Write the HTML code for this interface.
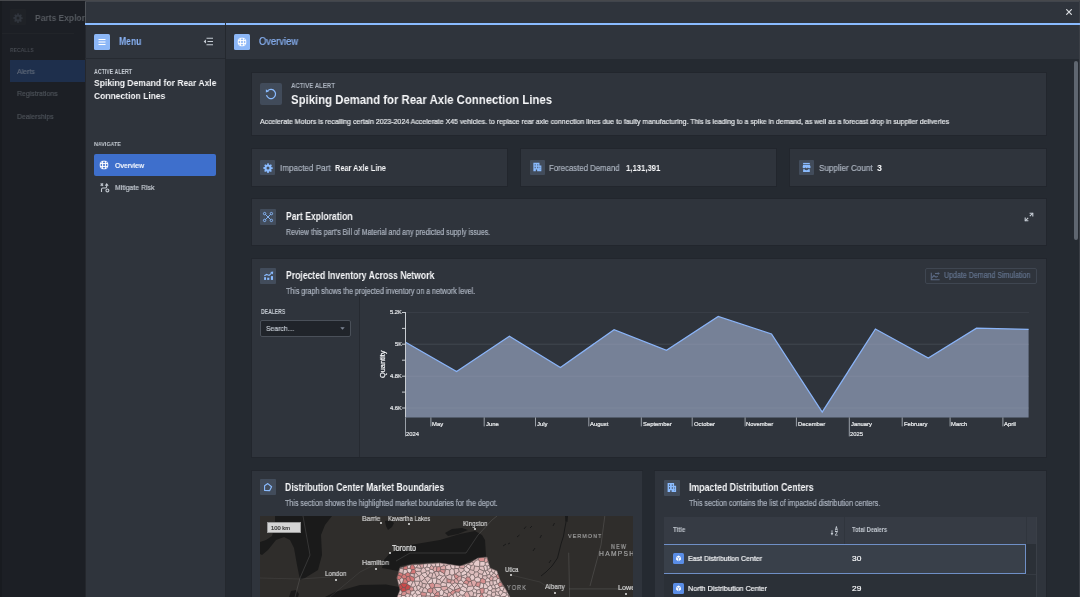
<!DOCTYPE html>
<html><head><meta charset="utf-8">
<style>
*{box-sizing:border-box;margin:0;padding:0}
html,body{width:1080px;height:597px;overflow:hidden;background:#1c1f25;font-family:"Liberation Sans",sans-serif;color:#f6f7f9}
.abs{position:absolute}
.t{position:absolute;white-space:nowrap;line-height:normal;transform-origin:0 0;will-change:transform}
</style></head><body>
<div class="abs" style="left:0px;top:0px;width:85px;height:597px;background:#1c1f25;"></div>
<div class="abs" style="left:0px;top:0px;width:2px;height:597px;background:#181b20;"></div>
<div class="abs" style="left:0px;top:0px;width:1080px;height:1px;background:#46484c;"></div>
<div class="abs" style="left:10px;top:9px;width:16px;height:16px;background:#1f2227;border-radius:1px"></div>
<svg class="abs" style="left:13.3px;top:12.7px" width="10" height="10" viewBox="0 0 16 16"><path fill="#30353d" fill-rule="evenodd" d="M8 5.6a2.4 2.4 0 100 4.8 2.4 2.4 0 000-4.8zM6.9 0.5h2.2l.4 2.1 1.3.6 1.8-1.2 1.6 1.6-1.2 1.8.6 1.3 2.1.4v2.2l-2.1.4-.6 1.3 1.2 1.8-1.6 1.6-1.8-1.2-1.3.6-.4 2.1H6.9l-.4-2.1-1.3-.6-1.8 1.2-1.6-1.6 1.2-1.8-.6-1.3L.5 9.1V6.9l2.1-.4.6-1.3L2 3.4 3.6 1.8l1.8 1.2 1.3-.6z"/></svg>
<div class="t" style="left:35.30px;top:12.31px;font-size:9.59px;font-weight:bold;color:#55595f;transform:scaleX(0.8844);">Parts Explorer</div>
<div class="abs" style="left:2px;top:33px;width:72px;height:1px;background:#212429;"></div>
<div class="t" style="left:10.40px;top:46.44px;font-size:6.25px;font-weight:bold;color:#43474e;transform:scaleX(0.8064);">RECALLS</div>
<div class="abs" style="left:10px;top:60px;width:75px;height:22px;background:#1e2f4c;"></div>
<div class="t" style="left:16.70px;top:66.82px;font-size:7.70px;font-weight:normal;-webkit-text-stroke:0.2px currentColor;color:#5e6878;transform:scaleX(0.9090);">Alerts</div>
<div class="t" style="left:16.70px;top:89.32px;font-size:7.70px;font-weight:normal;-webkit-text-stroke:0.2px currentColor;color:#4d5259;transform:scaleX(0.9053);">Registrations</div>
<div class="t" style="left:16.70px;top:112.02px;font-size:7.70px;font-weight:normal;-webkit-text-stroke:0.2px currentColor;color:#4d5259;transform:scaleX(0.9022);">Dealerships</div>
<div class="abs" style="left:85px;top:1px;width:995px;height:596px;background:#2f343c;"></div>
<div class="abs" style="left:85px;top:1px;width:1px;height:22px;background:#50545a;"></div>
<div class="abs" style="left:85px;top:25px;width:1px;height:572px;background:#24272d;"></div>
<div class="abs" style="left:85px;top:1px;width:995px;height:1px;background:#41454c;"></div>
<div class="abs" style="left:1079px;top:1px;width:1px;height:596px;background:#3b3f46;"></div>
<svg class="abs" style="left:1066px;top:9px" width="6" height="6" viewBox="0 0 6 6"><path d="M0.3 0.3L5.7 5.7M5.7 0.3L0.3 5.7" stroke="#dfe2e6" stroke-width="1.15"/></svg>
<div class="abs" style="left:85px;top:23px;width:140px;height:2px;background:#8abbff;"></div>
<div class="abs" style="left:226px;top:23px;width:854px;height:2px;background:#8abbff;"></div>
<div class="abs" style="left:225px;top:25px;width:1px;height:572px;background:#24282e;"></div>
<div class="abs" style="left:85px;top:58px;width:140px;height:1px;background:#262a31;"></div>
<div class="abs" style="left:94px;top:34px;width:16px;height:16px;background:#8cb7f7;border-radius:1.5px"></div>
<svg class="abs" style="left:94px;top:34px" width="16" height="16"><path d="M4.5 5.5h7M4.5 8h7M4.5 10.5h7" stroke="#fff" stroke-width="1.1"/></svg>
<div class="t" style="left:118.70px;top:35.71px;font-size:10.03px;font-weight:bold;color:#8ab4f8;transform:scaleX(0.8555);">Menu</div>
<svg class="abs" style="left:203px;top:37px" width="11" height="9" viewBox="0 0 11 9"><path d="M0.6 4.5L3 2.6v3.8z" fill="#c5cbd3"/><path d="M3.5 1.2h6.5M4.5 4.5h5.5M3.5 7.8h6.5" stroke="#c5cbd3" stroke-width="1.1"/></svg>
<div class="t" style="left:93.80px;top:67.97px;font-size:6.54px;font-weight:bold;color:#c5cbd3;transform:scaleX(0.8024);">ACTIVE ALERT</div>
<div class="t" style="left:93.80px;top:77.38px;font-size:9.74px;font-weight:bold;color:#f6f7f9;transform:scaleX(0.8797);">Spiking Demand for Rear Axle</div>
<div class="t" style="left:93.80px;top:89.78px;font-size:9.74px;font-weight:bold;color:#f6f7f9;transform:scaleX(0.8727);">Connection Lines</div>
<div class="t" style="left:93.80px;top:140.73px;font-size:5.81px;font-weight:bold;color:#c5cbd3;transform:scaleX(0.9219);">NAVIGATE</div>
<div class="abs" style="left:94px;top:154px;width:122px;height:22px;background:#3e6fcc;border-radius:2px"></div>
<svg class="abs" style="left:99.2px;top:160.2px" width="10" height="10" viewBox="0 0 10 10"><g fill="none" stroke="#fff"><circle cx="5" cy="5" r="4.1" stroke-width="1.4"/><path d="M3.6 1v8M6.4 1v8M1 3.6h8M1 6.4h8" stroke-width="1"/></g><circle cx="5" cy="5" r="4.9" fill="none" stroke="#3e6fcc" stroke-width="0.9"/></svg>
<div class="t" style="left:114.60px;top:160.86px;font-size:7.99px;font-weight:normal;-webkit-text-stroke:0.2px currentColor;color:#ffffff;transform:scaleX(0.8735);">Overview</div>
<svg class="abs" style="left:96px;top:180px" width="16" height="16" viewBox="0 0 16 16"><g fill="none" stroke="#c5cbd3" stroke-width="1.1"><path d="M4.7 3.5L7.1 5.9M7.1 3.5L4.7 5.9"/><path d="M10.7 5.2V6.6Q10.7 8 9.3 8H6.9Q5.5 8 5.5 9.4V11.9"/><circle cx="11.4" cy="10.4" r="1.45"/></g><path d="M8.7 5.7L10.7 3.1 12.7 5.7z" fill="#c5cbd3"/></svg>
<div class="t" style="left:114.60px;top:182.86px;font-size:7.99px;font-weight:normal;-webkit-text-stroke:0.2px currentColor;color:#c5cbd3;transform:scaleX(0.8633);">Mitigate Risk</div>
<div class="abs" style="left:226px;top:59px;width:853px;height:538px;background:#252a31;"></div>
<div class="abs" style="left:234px;top:34px;width:16px;height:16px;background:#8cb7f7;border-radius:1.5px"></div>
<svg class="abs" style="left:237.1px;top:36.8px" width="10" height="10" viewBox="0 0 10 10"><g fill="none" stroke="#fff"><circle cx="5" cy="5" r="4.1" stroke-width="1.4"/><path d="M3.6 1v8M6.4 1v8M1 3.6h8M1 6.4h8" stroke-width="1"/></g><circle cx="5" cy="5" r="4.9" fill="none" stroke="#8cb7f7" stroke-width="0.9"/></svg>
<div class="t" style="left:259.00px;top:35.51px;font-size:10.03px;font-weight:normal;-webkit-text-stroke:0.2px currentColor;color:#8ab4f8;transform:scaleX(0.9355);">Overview</div>
<div class="abs" style="left:1074px;top:61px;width:4px;height:179px;background:#5f6670;border-radius:2px"></div>
<div class="abs" style="left:252px;top:73px;width:794px;height:62px;background:#2f343c;box-shadow:0 0 0 1px rgba(17,20,24,0.15)"></div>
<div class="abs" style="left:260px;top:83px;width:22px;height:22px;background:#414b5a;border-radius:2px"></div>
<svg class="abs" style="left:264px;top:87px" width="14" height="14" viewBox="0 0 14 14"><path d="M3.6 3.9A4.6 4.6 0 1 1 2.5 8.2" fill="none" stroke="#8abbff" stroke-width="1.25"/><path d="M1.9 2.2L4.9 4.4 1.9 5.6z" fill="#8abbff"/></svg>
<div class="t" style="left:290.60px;top:81.71px;font-size:6.83px;font-weight:bold;color:#abb3bf;transform:scaleX(0.8895);">ACTIVE ALERT</div>
<div class="t" style="left:290.60px;top:91.78px;font-size:12.94px;font-weight:bold;color:#f6f7f9;transform:scaleX(0.8785);">Spiking Demand for Rear Axle Connection Lines</div>
<div class="t" style="left:260.00px;top:117.32px;font-size:7.27px;font-weight:normal;-webkit-text-stroke:0.2px currentColor;color:#e5e8eb;transform:scaleX(0.9593);">Accelerate Motors is recalling certain 2023-2024 Accelerate X45 vehicles. to replace rear axle connection lines due to faulty manufacturing. This is leading to a spike in demand, as well as a forecast drop in supplier deliveries</div>
<div class="abs" style="left:252px;top:149px;width:255px;height:37px;background:#2f343c;box-shadow:0 0 0 1px rgba(17,20,24,0.15)"></div>
<div class="abs" style="left:521px;top:149px;width:255px;height:37px;background:#2f343c;box-shadow:0 0 0 1px rgba(17,20,24,0.15)"></div>
<div class="abs" style="left:790px;top:149px;width:256px;height:37px;background:#2f343c;box-shadow:0 0 0 1px rgba(17,20,24,0.15)"></div>
<div class="abs" style="left:260px;top:160px;width:15px;height:15px;background:#424c5b;border-radius:1px"></div>
<svg class="abs" style="left:262.5px;top:162.5px" width="10" height="10" viewBox="0 0 16 16"><path fill="#8abbff" fill-rule="evenodd" d="M8 5.6a2.4 2.4 0 100 4.8 2.4 2.4 0 000-4.8zM6.9 0.5h2.2l.4 2.1 1.3.6 1.8-1.2 1.6 1.6-1.2 1.8.6 1.3 2.1.4v2.2l-2.1.4-.6 1.3 1.2 1.8-1.6 1.6-1.8-1.2-1.3.6-.4 2.1H6.9l-.4-2.1-1.3-.6-1.8 1.2-1.6-1.6 1.2-1.8-.6-1.3L.5 9.1V6.9l2.1-.4.6-1.3L2 3.4 3.6 1.8l1.8 1.2 1.3-.6z"/></svg>
<div class="t" style="left:279.60px;top:162.77px;font-size:8.87px;font-weight:normal;-webkit-text-stroke:0.2px currentColor;color:#abb3bf;transform:scaleX(0.9168);">Impacted Part</div>
<div class="t" style="left:335.00px;top:162.77px;font-size:8.87px;font-weight:bold;color:#f6f7f9;transform:scaleX(0.8308);">Rear Axle Line</div>
<div class="abs" style="left:530px;top:160px;width:15px;height:15px;background:#424c5b;border-radius:1px"></div>
<svg class="abs" style="left:530px;top:160px" width="15" height="15" viewBox="0 0 16 16"><path fill="#8abbff" fill-rule="evenodd" d="M3.6 3h6.5v2.8h2v6.1H3.6zM5 4.6v1.2h1V4.6zm2.8 0v1.2h1V4.6zM5 7.2v1.6h1V7.2zm2.8 0v1.6h1V7.2zm2.5 0v1.6h.6V7.2zM6.2 10.2v1.7h1.4v-1.7zm4.2-0.4v.6h.6v-.6z"/></svg>
<div class="t" style="left:549.40px;top:162.77px;font-size:8.87px;font-weight:normal;-webkit-text-stroke:0.2px currentColor;color:#abb3bf;transform:scaleX(0.8789);">Forecasted Demand</div>
<div class="t" style="left:625.50px;top:162.77px;font-size:8.87px;font-weight:bold;color:#f6f7f9;transform:scaleX(0.8696);">1,131,391</div>
<div class="abs" style="left:799px;top:160px;width:15px;height:15px;background:#424c5b;border-radius:1px"></div>
<svg class="abs" style="left:799px;top:160px" width="15" height="15" viewBox="0 0 15 15"><g fill="#8abbff"><rect x="4.1" y="2.9" width="6.7" height="1.2"/><path d="M4.1 4.7h6.8l0.7 2.4a1.33 1.2 0 0 1-2.66 0a1.33 1.2 0 0 1-2.66 0a1.33 1.2 0 0 1-2.66 0z"/><path d="M4.1 9.3h1.6a1.8 1.1 0 0 0 3.5 0h1.6v2.8H4.1z"/></g></svg>
<div class="t" style="left:818.50px;top:162.77px;font-size:8.87px;font-weight:normal;-webkit-text-stroke:0.2px currentColor;color:#abb3bf;transform:scaleX(0.9139);">Supplier Count</div>
<div class="t" style="left:876.60px;top:162.77px;font-size:8.87px;font-weight:bold;color:#f6f7f9;transform:scaleX(0.9734);">3</div>
<div class="abs" style="left:252px;top:199px;width:794px;height:46px;background:#2f343c;box-shadow:0 0 0 1px rgba(17,20,24,0.15)"></div>
<div class="abs" style="left:260px;top:209px;width:16px;height:16px;background:#424c5b;border-radius:1px"></div>
<svg class="abs" style="left:262px;top:211px" width="12" height="12" viewBox="0 0 12 12"><g fill="none" stroke="#8abbff" stroke-width="0.9"><circle cx="2.6" cy="2.6" r="1.2"/><circle cx="9.4" cy="2.6" r="1.2"/><circle cx="2.6" cy="9.4" r="1.2"/><circle cx="9.4" cy="9.4" r="1.2"/><path d="M3.5 3.5l5 5M8.5 3.5l-5 5"/></g></svg>
<div class="t" style="left:285.70px;top:210.85px;font-size:10.10px;font-weight:bold;color:#f6f7f9;transform:scaleX(0.8536);">Part Exploration</div>
<div class="t" style="left:285.70px;top:227.66px;font-size:8.21px;font-weight:normal;-webkit-text-stroke:0.2px currentColor;color:#abb3bf;transform:scaleX(0.8539);">Review this part's Bill of Material and any predicted supply issues.</div>
<svg class="abs" style="left:1024px;top:211.5px" width="10" height="10" viewBox="0 0 10 10"><g fill="none" stroke="#c8ced6" stroke-width="1.1"><path d="M1.2 8.8l3-3M5.8 4.2l3-3"/><path d="M1.2 5.6v3.2h3.2M5.6 1.2h3.2v3.2"/></g></svg>
<div class="abs" style="left:252px;top:259px;width:794px;height:198px;background:#2f343c;box-shadow:0 0 0 1px rgba(17,20,24,0.15)"></div>
<div class="abs" style="left:260px;top:268px;width:16px;height:16px;background:#424c5b;border-radius:1px"></div>
<svg class="abs" style="left:260px;top:268px" width="16" height="16" viewBox="0 0 16 16"><g fill="#8abbff"><rect x="4.1" y="9.2" width="1.9" height="2.7"/><rect x="7.2" y="9.7" width="2.1" height="2.2"/><rect x="10.9" y="8.1" width="2.1" height="3.8"/><path d="M13.2 3.6l-0.3 3-2.7-2.6z"/></g><path d="M4.3 7.8L6.7 6.4 9.1 7.4 11.6 5.1" fill="none" stroke="#8abbff" stroke-width="1.1"/></svg>
<div class="t" style="left:285.70px;top:270.05px;font-size:10.10px;font-weight:bold;color:#f6f7f9;transform:scaleX(0.8546);">Projected Inventory Across Network</div>
<div class="t" style="left:285.70px;top:286.66px;font-size:8.21px;font-weight:normal;-webkit-text-stroke:0.2px currentColor;color:#abb3bf;transform:scaleX(0.8586);">This graph shows the projected inventory on a network level.</div>
<div class="abs" style="left:359px;top:296px;width:1px;height:161px;background:#262a31;"></div>
<div class="t" style="left:260.80px;top:308.35px;font-size:7.12px;font-weight:bold;color:#c5cbd3;transform:scaleX(0.7140);">DEALERS</div>
<div class="abs" style="left:260px;top:320px;width:91px;height:17px;background:#20242a;border:1px solid #4a5059;border-radius:2px"></div>
<div class="t" style="left:265.90px;top:324.36px;font-size:7.99px;font-weight:normal;-webkit-text-stroke:0.2px currentColor;color:#c5cbd3;transform:scaleX(0.8552);">Search…</div>
<svg class="abs" style="left:339.5px;top:327px" width="5" height="3"><path d="M0.3 0.3h4.4L2.5 2.7z" fill="#7c8594"/></svg>
<svg class="abs" style="left:405.1px;top:300px;overflow:visible" width="624.1" height="140"><line x1="0" x2="624.1" y1="12.5" y2="12.5" stroke="#383d46" stroke-width="1"/><line x1="0" x2="624.1" y1="44.19999999999999" y2="44.19999999999999" stroke="#383d46" stroke-width="1"/><line x1="0" x2="624.1" y1="76.19999999999999" y2="76.19999999999999" stroke="#383d46" stroke-width="1"/><line x1="0" x2="624.1" y1="108.0" y2="108.0" stroke="#383d46" stroke-width="1"/><polygon points="0.5,117.39999999999998 0.6,42.3 51.6,71.5 104.4,36.3 155.4,67.5 209.1,29.7 261.5,50.3 313.2,16.5 366.5,34.0 417.2,112.0 470.4,29.0 523.3,58.0 571.5,28.2 623.6,29.3 623.6,117.39999999999998" fill="#768197"/><line x1="0" x2="624.1" y1="44.19999999999999" y2="44.19999999999999" stroke="#ffffff" stroke-opacity="0.06" stroke-width="1"/><line x1="0" x2="624.1" y1="76.19999999999999" y2="76.19999999999999" stroke="#ffffff" stroke-opacity="0.06" stroke-width="1"/><line x1="0" x2="624.1" y1="108.0" y2="108.0" stroke="#ffffff" stroke-opacity="0.06" stroke-width="1"/><polyline points="0.6,42.3 51.6,71.5 104.4,36.3 155.4,67.5 209.1,29.7 261.5,50.3 313.2,16.5 366.5,34.0 417.2,112.0 470.4,29.0 523.3,58.0 571.5,28.2 623.6,29.3" fill="none" stroke="#8ab4f8" stroke-width="1.3" stroke-linejoin="miter"/><line x1="0.5" x2="0.5" y1="12" y2="117.39999999999998" stroke="#c9cdd2" stroke-width="1"/><line x1="-3" x2="0.5" y1="12.5" y2="12.5" stroke="#c9cdd2" stroke-width="1"/><line x1="-3" x2="0.5" y1="28.399999999999977" y2="28.399999999999977" stroke="#c9cdd2" stroke-width="1"/><line x1="-3" x2="0.5" y1="44.19999999999999" y2="44.19999999999999" stroke="#c9cdd2" stroke-width="1"/><line x1="-3" x2="0.5" y1="60.19999999999999" y2="60.19999999999999" stroke="#c9cdd2" stroke-width="1"/><line x1="-3" x2="0.5" y1="76.19999999999999" y2="76.19999999999999" stroke="#c9cdd2" stroke-width="1"/><line x1="-3" x2="0.5" y1="92.10000000000002" y2="92.10000000000002" stroke="#c9cdd2" stroke-width="1"/><line x1="-3" x2="0.5" y1="108.0" y2="108.0" stroke="#c9cdd2" stroke-width="1"/><line x1="25.9" x2="25.9" y1="117.39999999999998" y2="126.39999999999998" stroke="#9aa0a8" stroke-width="1"/><line x1="79.2" x2="79.2" y1="117.39999999999998" y2="126.39999999999998" stroke="#9aa0a8" stroke-width="1"/><line x1="130.5" x2="130.5" y1="117.39999999999998" y2="126.39999999999998" stroke="#9aa0a8" stroke-width="1"/><line x1="183.8" x2="183.8" y1="117.39999999999998" y2="126.39999999999998" stroke="#9aa0a8" stroke-width="1"/><line x1="236.3" x2="236.3" y1="117.39999999999998" y2="126.39999999999998" stroke="#9aa0a8" stroke-width="1"/><line x1="287.2" x2="287.2" y1="117.39999999999998" y2="126.39999999999998" stroke="#9aa0a8" stroke-width="1"/><line x1="340.1" x2="340.1" y1="117.39999999999998" y2="126.39999999999998" stroke="#9aa0a8" stroke-width="1"/><line x1="391.4" x2="391.4" y1="117.39999999999998" y2="126.39999999999998" stroke="#9aa0a8" stroke-width="1"/><line x1="444.3" x2="444.3" y1="117.39999999999998" y2="136.39999999999998" stroke="#9aa0a8" stroke-width="1"/><line x1="497.2" x2="497.2" y1="117.39999999999998" y2="126.39999999999998" stroke="#9aa0a8" stroke-width="1"/><line x1="545.1" x2="545.1" y1="117.39999999999998" y2="126.39999999999998" stroke="#9aa0a8" stroke-width="1"/><line x1="597.9" x2="597.9" y1="117.39999999999998" y2="126.39999999999998" stroke="#9aa0a8" stroke-width="1"/><line x1="0.5" x2="0.5" y1="117.39999999999998" y2="136.39999999999998" stroke="#9aa0a8" stroke-width="1"/></svg>
<div class="t" style="left:390.00px;top:309.23px;font-size:5.81px;font-weight:normal;-webkit-text-stroke:0.2px currentColor;color:#e6e8eb;transform:scaleX(0.9783);">5.2K</div>
<div class="t" style="left:394.90px;top:340.93px;font-size:5.81px;font-weight:normal;-webkit-text-stroke:0.2px currentColor;color:#e6e8eb;transform:scaleX(0.9562);">5K</div>
<div class="t" style="left:390.00px;top:372.93px;font-size:5.81px;font-weight:normal;-webkit-text-stroke:0.2px currentColor;color:#e6e8eb;transform:scaleX(0.9783);">4.8K</div>
<div class="t" style="left:390.00px;top:404.73px;font-size:5.81px;font-weight:normal;-webkit-text-stroke:0.2px currentColor;color:#e6e8eb;transform:scaleX(0.9783);">4.6K</div>
<div class="t" style="left:432.20px;top:420.57px;font-size:5.89px;font-weight:normal;-webkit-text-stroke:0.2px currentColor;color:#eceef0;">May</div>
<div class="t" style="left:485.50px;top:420.57px;font-size:5.89px;font-weight:normal;-webkit-text-stroke:0.2px currentColor;color:#eceef0;">June</div>
<div class="t" style="left:536.80px;top:420.57px;font-size:5.89px;font-weight:normal;-webkit-text-stroke:0.2px currentColor;color:#eceef0;">July</div>
<div class="t" style="left:590.10px;top:420.57px;font-size:5.89px;font-weight:normal;-webkit-text-stroke:0.2px currentColor;color:#eceef0;">August</div>
<div class="t" style="left:642.60px;top:420.57px;font-size:5.89px;font-weight:normal;-webkit-text-stroke:0.2px currentColor;color:#eceef0;">September</div>
<div class="t" style="left:693.50px;top:420.57px;font-size:5.89px;font-weight:normal;-webkit-text-stroke:0.2px currentColor;color:#eceef0;">October</div>
<div class="t" style="left:746.40px;top:420.57px;font-size:5.89px;font-weight:normal;-webkit-text-stroke:0.2px currentColor;color:#eceef0;">November</div>
<div class="t" style="left:797.70px;top:420.57px;font-size:5.89px;font-weight:normal;-webkit-text-stroke:0.2px currentColor;color:#eceef0;">December</div>
<div class="t" style="left:850.60px;top:420.57px;font-size:5.89px;font-weight:normal;-webkit-text-stroke:0.2px currentColor;color:#eceef0;">January</div>
<div class="t" style="left:903.50px;top:420.57px;font-size:5.89px;font-weight:normal;-webkit-text-stroke:0.2px currentColor;color:#eceef0;">February</div>
<div class="t" style="left:951.40px;top:420.57px;font-size:5.89px;font-weight:normal;-webkit-text-stroke:0.2px currentColor;color:#eceef0;">March</div>
<div class="t" style="left:1004.20px;top:420.57px;font-size:5.89px;font-weight:normal;-webkit-text-stroke:0.2px currentColor;color:#eceef0;">April</div>
<div class="t" style="left:406.40px;top:430.57px;font-size:5.89px;font-weight:normal;-webkit-text-stroke:0.2px currentColor;color:#e6e8eb;">2024</div>
<div class="t" style="left:850.20px;top:430.57px;font-size:5.89px;font-weight:normal;-webkit-text-stroke:0.2px currentColor;color:#e6e8eb;">2025</div>
<svg class="abs" style="left:374px;top:340px" width="16" height="50"><text x="0" y="0" transform="translate(11.3,24.3) rotate(-90)" text-anchor="middle" font-family="Liberation Sans" font-size="7.4" fill="#f6f7f9" stroke="#f6f7f9" stroke-width="0.2">Quantity</text></svg>
<div class="abs" style="left:925px;top:268px;width:112px;height:16px;background:transparent;border:1px solid #3f4651;border-radius:2px"></div>
<svg class="abs" style="left:926px;top:268px" width="16" height="16" viewBox="0 0 16 16"><g fill="none" stroke="#5b6a84" stroke-width="1.1"><path d="M5.3 4.8v7h8.3"/><path d="M5.8 9.8L7.9 7.6 10 9.2 11.8 8.2"/><path d="M9 5.5H12.3"/></g><path d="M11.8 3.9L13.9 5.5 11.8 7.1z" fill="#5b6a84"/></svg>
<div class="t" style="left:943.70px;top:271.29px;font-size:8.28px;font-weight:normal;-webkit-text-stroke:0.2px currentColor;color:#62728c;transform:scaleX(0.8538);">Update Demand Simulation</div>
<div class="abs" style="left:252px;top:471px;width:390px;height:126px;background:#2f343c;box-shadow:0 0 0 1px rgba(17,20,24,0.15)"></div>
<div class="abs" style="left:260px;top:479px;width:16px;height:16px;background:#424c5b;border-radius:1px"></div>
<svg class="abs" style="left:260px;top:479px" width="16" height="16" viewBox="0 0 16 16"><path d="M7.8 4.6L11.6 7.7 9.7 11.6 4.6 11.5 4.6 6.7z" fill="none" stroke="#8abbff" stroke-width="1.15" stroke-linejoin="round"/></svg>
<div class="t" style="left:285.10px;top:481.75px;font-size:10.10px;font-weight:bold;color:#f6f7f9;transform:scaleX(0.8600);">Distribution Center Market Boundaries</div>
<div class="t" style="left:285.10px;top:498.56px;font-size:8.21px;font-weight:normal;-webkit-text-stroke:0.2px currentColor;color:#abb3bf;transform:scaleX(0.8653);">This section shows the highlighted market boundaries for the depot.</div>
<div class="abs" style="left:655px;top:471px;width:391px;height:126px;background:#2f343c;box-shadow:0 0 0 1px rgba(17,20,24,0.15)"></div>
<div class="abs" style="left:664px;top:480px;width:16px;height:16px;background:#424c5b;border-radius:1px"></div>
<svg class="abs" style="left:664px;top:480px" width="16" height="16" viewBox="0 0 16 16"><path fill="#8abbff" fill-rule="evenodd" d="M3.6 3h6.5v2.8h2v6.1H3.6zM5 4.6v1.2h1V4.6zm2.8 0v1.2h1V4.6zM5 7.2v1.6h1V7.2zm2.8 0v1.6h1V7.2zm2.5 0v1.6h.6V7.2zM6.2 10.2v1.7h1.4v-1.7zm4.2-0.4v.6h.6v-.6z"/></svg>
<div class="t" style="left:688.50px;top:482.05px;font-size:10.10px;font-weight:bold;color:#f6f7f9;transform:scaleX(0.8645);">Impacted Distribution Centers</div>
<div class="t" style="left:688.50px;top:498.56px;font-size:8.21px;font-weight:normal;-webkit-text-stroke:0.2px currentColor;color:#abb3bf;transform:scaleX(0.8664);">This section contains the list of impacted distribution centers.</div>
<div class="abs" style="left:664px;top:517px;width:372px;height:80px;background:#2b3037;"></div>
<div class="abs" style="left:664px;top:517px;width:372px;height:27px;background:#363b44;"></div>
<div class="abs" style="left:844px;top:517px;width:1px;height:27px;background:#30353d;"></div>
<div class="abs" style="left:1026px;top:517px;width:1px;height:27px;background:#30353d;"></div>
<div class="abs" style="left:1036px;top:517px;width:1px;height:80px;background:#3a3f47;"></div>
<div class="t" style="left:673.20px;top:526.21px;font-size:6.40px;font-weight:bold;color:#c5cbd3;transform:scaleX(0.9439);">Title</div>
<svg class="abs" style="left:829.5px;top:524.5px" width="9" height="12" viewBox="0 0 9 12"><g fill="#c5cbd3"><path d="M4.9 5.6L6 1.2h.8L7.9 5.6h-.8l-.25-.9H5.95l-.25.9zm1.25-1.6h.5L6.4 2.6z"/><path d="M5 6.1h2.8v.7L5.9 9.8h1.9v.8H4.9v-.7l1.9-3h-1.8z"/><path d="M0.6 8h2.8L2 10.5z"/></g><path d="M2 5.3v3" stroke="#c5cbd3" stroke-width="0.9"/></svg>
<div class="t" style="left:851.70px;top:526.21px;font-size:6.40px;font-weight:bold;color:#c5cbd3;transform:scaleX(0.8869);">Total Dealers</div>
<div class="abs" style="left:664px;top:544px;width:362px;height:30px;background:#39404a;border:1px solid #6f8fc6;border-left:none"></div>
<div class="abs" style="left:1026px;top:574px;width:10px;height:1px;background:#353a42;"></div>
<div class="abs" style="left:673px;top:553px;width:11px;height:11px;background:#5a8de6;border-radius:1.5px"></div><svg class="abs" style="left:673px;top:553px" width="11" height="11" viewBox="0 0 11 11"><path d="M5.5 2.6l2.4 1.3v2.9L5.5 8.2 3.1 6.8V3.9z" fill="#fff"/><path d="M3.3 4l2.2 1.2 2.2-1.2M5.5 5.2v2.8" stroke="#5a8de6" stroke-width="0.6" fill="none"/></svg>
<div class="t" style="left:687.80px;top:554.05px;font-size:7.56px;font-weight:normal;-webkit-text-stroke:0.2px currentColor;color:#f6f7f9;transform:scaleX(0.9284);">East Distribution Center</div>
<div class="t" style="left:851.70px;top:554.05px;font-size:7.56px;font-weight:normal;-webkit-text-stroke:0.2px currentColor;color:#f6f7f9;transform:scaleX(1.1062);">30</div>
<div class="abs" style="left:673px;top:583px;width:11px;height:11px;background:#5a8de6;border-radius:1.5px"></div><svg class="abs" style="left:673px;top:583px" width="11" height="11" viewBox="0 0 11 11"><path d="M5.5 2.6l2.4 1.3v2.9L5.5 8.2 3.1 6.8V3.9z" fill="#fff"/><path d="M3.3 4l2.2 1.2 2.2-1.2M5.5 5.2v2.8" stroke="#5a8de6" stroke-width="0.6" fill="none"/></svg>
<div class="t" style="left:687.80px;top:584.05px;font-size:7.56px;font-weight:normal;-webkit-text-stroke:0.2px currentColor;color:#f6f7f9;transform:scaleX(0.9522);">North Distribution Center</div>
<div class="t" style="left:851.70px;top:584.05px;font-size:7.56px;font-weight:normal;-webkit-text-stroke:0.2px currentColor;color:#f6f7f9;transform:scaleX(1.1062);">29</div>
<svg class="abs" style="left:260px;top:516px" width="373" height="81" viewBox="0 0 373 81"><rect width="373" height="81" fill="#2f2d2b"/><polygon points="15.0,0.0 72.0,0.0 65.0,9.0 61.0,19.0 62.0,39.0 58.0,54.0 45.0,62.0 40.0,64.0 37.0,49.0 34.0,32.0 30.0,24.0 24.0,21.0 16.0,24.0 8.0,34.0 2.0,39.0 0.0,38.0 0.0,26.0 6.0,24.0 12.0,20.0 15.0,9.0" fill="#1a1a1a"/><polygon points="65.0,81.0 75.0,76.0 100.0,69.0 126.0,68.5 139.0,71.0 140.0,81.0" fill="#1a1a1a"/><polygon points="29.0,81.0 31.0,75.0 36.0,74.0 39.0,78.0 38.0,81.0" fill="#1a1a1a"/><polygon points="122.0,52.0 124.0,44.0 130.0,37.0 150.0,29.0 180.0,24.0 200.0,18.0 215.0,15.0 222.0,19.0 225.0,24.0 226.0,40.0 230.0,50.0 220.0,42.0 212.0,44.0 200.0,50.0 185.0,51.0 180.0,46.0 155.0,47.0 140.0,50.0 138.0,55.0" fill="#1a1a1a"/><polygon points="185.0,17.0 192.0,13.0 202.0,12.0 208.0,14.0 198.0,18.0 188.0,20.0" fill="#1a1a1a"/><polygon points="210.0,10.0 216.0,6.0 220.0,8.0 214.0,13.0" fill="#1a1a1a"/><polygon points="125.0,5.0 130.0,4.0 134.0,7.0 132.0,11.0 128.0,14.0 126.0,10.0" fill="#1a1a1a"/><polyline points="306.5,0.0 306.0,6.0 304.5,14.0 303.5,20.0 301.0,28.0 299.0,36.0 297.5,42.0 292.0,50.0 286.0,56.0 281.0,60.0" fill="none" stroke="#1a1a1a" stroke-width="1.0"/><polygon points="305.0,0.0 308.0,0.0 307.5,6.0 305.5,5.0" fill="#1a1a1a"/><line x1="264" y1="13" x2="266" y2="10.5" stroke="#1a1a1a" stroke-width="1.0"/><line x1="257" y1="21" x2="259.5" y2="19" stroke="#1a1a1a" stroke-width="1.0"/><line x1="273" y1="35" x2="275" y2="32" stroke="#1a1a1a" stroke-width="1.0"/><line x1="280" y1="22" x2="281.5" y2="19" stroke="#1a1a1a" stroke-width="1.0"/><line x1="243" y1="30" x2="246" y2="28" stroke="#1a1a1a" stroke-width="1.0"/><line x1="293" y1="10" x2="294.5" y2="7" stroke="#1a1a1a" stroke-width="1.0"/><line x1="289" y1="47" x2="291" y2="44" stroke="#1a1a1a" stroke-width="1.0"/><line x1="270" y1="12" x2="272" y2="10" stroke="#1a1a1a" stroke-width="1.0"/><line x1="248" y1="28" x2="250" y2="27" stroke="#1a1a1a" stroke-width="1.0"/><polyline points="43.0,0.0 50.0,39.0 40.0,62.0 35.0,81.0" stroke="#9a9896" stroke-opacity="0.45" stroke-width="0.5" fill="none"/><polyline points="136.0,45.0 150.0,37.0 206.0,37.0 218.0,19.0 232.0,4.0 237.0,0.0" stroke="#9a9896" stroke-opacity="0.45" stroke-width="0.5" fill="none"/><polyline points="308.7,36.7 309.6,81.0" stroke="#9a9896" stroke-opacity="0.45" stroke-width="0.5" fill="none"/><polyline points="309.0,72.9 373.0,72.9" stroke="#9a9896" stroke-opacity="0.45" stroke-width="0.5" fill="none"/><polyline points="344.8,0.0 341.0,29.0 330.0,70.0" stroke="#9a9896" stroke-opacity="0.45" stroke-width="0.5" fill="none"/><polyline points="0.0,62.0 40.0,63.0 70.0,61.0" stroke="#777" stroke-opacity="0.35" stroke-width="0.5" fill="none"/><polyline points="70.0,81.0 100.0,56.0 124.0,44.0" stroke="#777" stroke-opacity="0.35" stroke-width="0.5" fill="none"/><polyline points="251.0,59.0 280.0,66.0 295.0,76.0" stroke="#777" stroke-opacity="0.35" stroke-width="0.5" fill="none"/><g stroke="#6d5d5d" stroke-width="0.55" stroke-linejoin="round"><polygon points="136.7,82.1 136.0,84.0 136.5,84.0 137.4,83.2" fill="#e6cbcb"/><polygon points="137.4,83.2 138.6,83.5 141.0,81.5 141.6,79.4 141.3,78.8 138.5,77.8 136.7,82.1" fill="#dcbcbc"/><polygon points="138.6,83.5 137.4,83.2 136.5,84.0 138.8,84.0" fill="#dcbcbc"/><polygon points="139.8,68.4 138.5,68.2 139.1,70.2" fill="#dca8a8"/><polygon points="137.5,60.2 137.0,62.0 137.1,62.5" fill="#d57878"/><polygon points="138.9,56.2 139.1,55.0 138.7,56.4" fill="#d57878"/><polygon points="139.8,68.4 140.7,68.1 140.9,67.7 139.5,63.6 137.3,63.1 138.5,68.2" fill="#dfc0c0"/><polygon points="141.0,81.5 144.0,83.6 146.0,81.0 145.4,79.6 141.6,79.4" fill="#e8cfcf"/><polygon points="141.7,60.5 143.2,57.9 143.0,57.5 138.9,56.2 138.7,56.4 137.9,59.2" fill="#d57878"/><polygon points="140.8,73.9 142.7,71.3 140.7,68.1 139.8,68.4 139.1,70.2 140.0,73.9" fill="#c94a4a"/><polygon points="140.9,67.7 142.7,66.9 143.8,62.9 141.8,61.5 139.5,63.6" fill="#dfc0c0"/><polygon points="137.1,62.5 137.3,63.1 139.5,63.6 141.8,61.5 141.7,60.5 137.9,59.2 137.5,60.2" fill="#d57878"/><polygon points="138.6,83.5 138.8,84.0 144.0,84.0 144.0,83.6 141.0,81.5" fill="#e8cfcf"/><polygon points="138.9,56.2 143.0,57.5 143.6,53.2 143.2,52.8 139.9,52.2 139.1,55.0" fill="#dcbcbc"/><polygon points="141.8,61.5 143.8,62.9 146.0,62.8 146.9,60.8 145.0,58.3 143.2,57.9 141.7,60.5" fill="#d57878"/><polygon points="141.3,78.8 142.3,75.9 140.8,73.9 140.0,73.9 140.0,74.0 138.5,77.8" fill="#dfc0c0"/><polygon points="140.7,68.1 142.7,71.3 145.1,71.9 147.3,68.3 147.1,67.4 142.7,66.9 140.9,67.7" fill="#c94a4a"/><polygon points="143.2,52.8 143.8,50.9 140.0,52.0 139.9,52.2" fill="#e6cbcb"/><polygon points="140.8,73.9 142.3,75.9 145.9,75.3 146.3,74.2 145.1,71.9 142.7,71.3" fill="#c94a4a"/><polygon points="143.2,57.9 145.0,58.3 147.8,56.2 146.9,53.5 143.6,53.2 143.0,57.5" fill="#e3c6c6"/><polygon points="142.3,75.9 141.3,78.8 141.6,79.4 145.4,79.6 146.5,77.4 145.9,75.3" fill="#d69090"/><polygon points="147.3,68.3 150.6,70.5 150.6,70.5 153.3,65.3 150.6,64.7 147.8,65.8 147.1,67.4" fill="#e3c6c6"/><polygon points="146.0,81.0 148.2,82.1 150.7,78.4 150.6,78.3 146.5,77.4 145.4,79.6" fill="#e6cbcb"/><polygon points="144.0,83.6 144.0,84.0 149.2,84.0 148.2,82.1 146.0,81.0" fill="#d69090"/><polygon points="146.3,74.2 149.4,73.5 150.6,70.5 147.3,68.3 145.1,71.9" fill="#c94a4a"/><polygon points="143.6,53.2 146.9,53.5 148.0,52.5 147.2,49.8 143.8,50.9 143.2,52.8" fill="#d57878"/><polygon points="142.7,66.9 147.1,67.4 147.8,65.8 146.0,62.8 143.8,62.9" fill="#d57878"/><polygon points="145.9,75.3 146.5,77.4 150.6,78.3 150.9,75.1 149.4,73.5 146.3,74.2" fill="#d69090"/><polygon points="146.9,60.8 149.6,60.2 150.1,59.6 150.4,57.5 147.8,56.2 145.0,58.3" fill="#d57878"/><polygon points="153.5,81.7 152.4,79.2 150.7,78.4 148.2,82.1 149.2,84.0 152.2,84.0" fill="#e8cfcf"/><polygon points="152.2,84.0 157.7,84.0 157.9,83.1 156.5,81.5 153.5,81.7" fill="#dcbcbc"/><polygon points="146.0,62.8 147.8,65.8 150.6,64.7 149.6,60.2 146.9,60.8" fill="#d57878"/><polygon points="146.9,53.5 147.8,56.2 150.4,57.5 150.4,57.4 151.9,53.9 150.0,52.3 148.0,52.5" fill="#e8cfcf"/><polygon points="148.0,52.5 150.0,52.3 151.1,49.1 151.0,48.9 150.0,49.0 147.2,49.8" fill="#e6cbcb"/><polygon points="150.7,78.4 152.4,79.2 155.4,76.5 155.5,75.3 154.0,74.5 150.9,75.1 150.6,78.3" fill="#e8cfcf"/><polygon points="149.6,60.2 150.6,64.7 153.3,65.3 154.4,65.1 154.7,62.2 154.2,61.4 150.1,59.6" fill="#d57878"/><polygon points="150.9,75.1 154.0,74.5 153.3,71.2 150.6,70.5 150.6,70.5 149.4,73.5" fill="#d69090"/><polygon points="151.1,49.1 153.3,48.8 151.0,48.9" fill="#e8cfcf"/><polygon points="150.0,52.3 151.9,53.9 154.9,53.3 155.3,52.1 153.3,48.8 153.3,48.8 151.1,49.1" fill="#d57878"/><polygon points="153.5,81.7 156.5,81.5 157.4,79.2 155.4,76.5 152.4,79.2" fill="#e6cbcb"/><polygon points="150.1,59.6 154.2,61.4 154.4,57.8 150.4,57.4 150.4,57.5" fill="#dcbcbc"/><polygon points="155.3,52.1 156.4,51.6 158.0,48.5 153.3,48.8" fill="#e8cfcf"/><polygon points="150.6,70.5 153.3,71.2 155.7,69.7 154.5,65.2 154.4,65.1 153.3,65.3" fill="#e3c6c6"/><polygon points="154.0,74.5 155.5,75.3 157.5,74.1 156.6,70.2 155.7,69.7 153.3,71.2" fill="#e3c6c6"/><polygon points="154.7,62.2 158.7,60.0 155.7,56.7 154.4,57.8 154.2,61.4" fill="#dcbcbc"/><polygon points="150.4,57.4 154.4,57.8 155.7,56.7 155.9,55.5 154.9,53.3 151.9,53.9" fill="#d57878"/><polygon points="154.5,65.2 159.9,65.3 160.4,65.1 159.2,60.0 158.7,60.0 154.7,62.2 154.4,65.1" fill="#e3c6c6"/><polygon points="155.5,75.3 155.4,76.5 157.4,79.2 160.8,78.2 161.1,76.5 158.5,74.3 157.5,74.1" fill="#e6cbcb"/><polygon points="161.1,82.4 157.9,83.1 157.7,84.0 162.1,84.0" fill="#dfc0c0"/><polygon points="157.9,83.1 161.1,82.4 161.9,80.1 160.8,78.2 157.4,79.2 156.5,81.5" fill="#e6cbcb"/><polygon points="154.9,53.3 155.9,55.5 160.9,55.2 161.6,52.5 156.4,51.6 155.3,52.1" fill="#dfc0c0"/><polygon points="155.7,69.7 156.6,70.2 158.6,69.5 159.9,65.3 154.5,65.2" fill="#e3c6c6"/><polygon points="155.7,56.7 158.7,60.0 159.2,60.0 161.5,58.4 161.7,57.5 160.9,55.2 155.9,55.5" fill="#dfc0c0"/><polygon points="158.6,69.5 161.2,71.0 162.0,70.9 162.4,67.1 161.3,65.3 160.4,65.1 159.9,65.3" fill="#dcbcbc"/><polygon points="161.1,76.5 162.2,75.9 163.6,72.0 162.0,70.9 161.2,71.0 158.5,74.3" fill="#dfc0c0"/><polygon points="157.5,74.1 158.5,74.3 161.2,71.0 158.6,69.5 156.6,70.2" fill="#e6cbcb"/><polygon points="161.6,52.4 159.4,48.4 158.0,48.5 156.4,51.6 161.6,52.5" fill="#dcbcbc"/><polygon points="161.6,52.5 160.9,55.2 161.7,57.5 165.8,56.4 166.4,55.0 164.9,52.0 163.4,51.6 161.6,52.4" fill="#dfc0c0"/><polygon points="159.2,60.0 160.4,65.1 161.3,65.3 164.8,62.7 165.0,61.8 161.5,58.4" fill="#dfc0c0"/><polygon points="167.1,83.4 166.3,82.5 164.0,84.0 167.2,84.0" fill="#e3c6c6"/><polygon points="161.9,80.1 166.0,80.3 166.2,80.0 166.6,76.9 162.2,75.9 161.1,76.5 160.8,78.2" fill="#d69090"/><polygon points="161.6,52.4 163.4,51.6 163.5,48.1 159.4,48.4" fill="#dca8a8"/><polygon points="161.1,82.4 162.1,84.0 164.0,84.0 166.3,82.5 166.0,80.3 161.9,80.1" fill="#dcbcbc"/><polygon points="162.0,70.9 163.6,72.0 165.3,71.8 166.5,68.1 162.4,67.1" fill="#dcbcbc"/><polygon points="161.5,58.4 165.0,61.8 167.8,60.2 165.8,56.4 161.7,57.5" fill="#e6cbcb"/><polygon points="166.2,80.0 170.2,80.1 170.8,77.3 167.5,75.9 166.6,76.9" fill="#e6cbcb"/><polygon points="166.3,82.5 167.1,83.4 170.3,83.0 170.7,80.8 170.2,80.1 166.2,80.0 166.0,80.3" fill="#dcbcbc"/><polygon points="162.4,67.1 166.5,68.1 167.6,67.3 167.6,66.4 164.8,62.7 161.3,65.3" fill="#dcbcbc"/><polygon points="162.2,75.9 166.6,76.9 167.5,75.9 167.7,73.6 165.3,71.8 163.6,72.0" fill="#dfc0c0"/><polygon points="167.7,73.6 170.7,72.0 169.0,68.0 167.6,67.3 166.5,68.1 165.3,71.8" fill="#e3c6c6"/><polygon points="163.4,51.6 164.9,52.0 167.0,50.9 167.7,47.8 163.5,48.1" fill="#e6cbcb"/><polygon points="167.6,66.4 171.3,62.2 167.8,60.2 167.8,60.2 165.0,61.8 164.8,62.7" fill="#dfc0c0"/><polygon points="182.9,83.9 182.8,84.0 183.4,84.0" fill="#e8cfcf"/><polygon points="167.2,84.0 171.2,84.0 170.3,83.0 167.1,83.4" fill="#dfc0c0"/><polygon points="164.9,52.0 166.4,55.0 169.0,54.9 170.2,53.2 169.7,51.9 167.0,50.9" fill="#e6cbcb"/><polygon points="165.8,56.4 167.8,60.2 167.8,60.2 169.9,56.9 169.0,54.9 166.4,55.0" fill="#dfc0c0"/><polygon points="167.0,50.9 169.7,51.9 171.3,49.3 171.0,47.6 170.9,47.6 167.7,47.8" fill="#e8cfcf"/><polygon points="169.0,68.0 172.8,66.7 172.1,62.4 171.7,62.2 171.3,62.2 167.6,66.4 167.6,67.3" fill="#e8cfcf"/><polygon points="167.5,75.9 170.8,77.3 172.7,76.7 172.9,72.3 170.7,72.0 167.7,73.6" fill="#d69090"/><polygon points="171.0,47.6 171.0,47.6 170.9,47.6" fill="#e8cfcf"/><polygon points="169.9,56.9 172.8,57.3 174.4,56.0 174.5,55.9 173.0,53.8 170.2,53.2 169.0,54.9" fill="#e8cfcf"/><polygon points="170.2,80.1 170.7,80.8 174.4,80.5 174.9,79.3 174.7,78.4 172.7,76.7 170.8,77.3" fill="#e3c6c6"/><polygon points="171.3,62.2 171.7,62.2 172.8,57.3 169.9,56.9 167.8,60.2" fill="#dfc0c0"/><polygon points="170.2,53.2 173.0,53.8 173.9,51.0 171.3,49.3 169.7,51.9" fill="#dca8a8"/><polygon points="177.8,83.4 174.8,82.6 173.9,84.0 177.8,84.0" fill="#dfc0c0"/><polygon points="171.2,84.0 173.9,84.0 174.8,82.6 174.4,80.5 170.7,80.8 170.3,83.0" fill="#e6cbcb"/><polygon points="172.1,62.4 176.5,62.0 176.7,61.4 174.4,56.0 172.8,57.3 171.7,62.2" fill="#dfc0c0"/><polygon points="170.7,72.0 172.9,72.3 174.3,71.6 174.3,71.5 174.7,68.3 172.8,66.7 169.0,68.0" fill="#d69090"/><polygon points="174.5,55.9 176.5,55.3 176.9,50.9 175.7,50.1 173.9,51.0 173.0,53.8" fill="#dca8a8"/><polygon points="173.9,51.0 175.7,50.1 175.7,47.3 171.0,47.6 171.0,47.6 171.3,49.3" fill="#dfc0c0"/><polygon points="172.9,72.3 172.7,76.7 174.7,78.4 177.3,75.7 174.3,71.6" fill="#dca8a8"/><polygon points="172.8,66.7 174.7,68.3 176.2,67.3 177.0,62.8 176.5,62.0 172.1,62.4" fill="#e8cfcf"/><polygon points="175.7,50.1 176.9,50.9 179.8,50.7 179.5,47.0 179.4,47.0 175.7,47.3" fill="#e6cbcb"/><polygon points="174.4,56.0 176.7,61.4 179.3,58.9 178.8,55.8 176.5,55.3 174.5,55.9" fill="#dcbcbc"/><polygon points="176.5,62.0 177.0,62.8 179.8,63.7 182.7,60.2 179.3,58.9 176.7,61.4" fill="#e6cbcb"/><polygon points="174.8,82.6 177.8,83.4 179.1,82.4 179.5,80.1 174.9,79.3 174.4,80.5" fill="#d69090"/><polygon points="174.3,71.5 181.0,71.5 181.3,70.7 180.8,68.2 176.2,67.3 174.7,68.3" fill="#dca8a8"/><polygon points="177.8,83.4 177.8,84.0 181.4,84.0 179.1,82.4" fill="#e3c6c6"/><polygon points="178.8,55.8 180.0,55.0 180.7,53.4 180.4,51.1 179.8,50.7 176.9,50.9 176.5,55.3" fill="#d69090"/><polygon points="174.9,79.3 179.5,80.1 180.1,79.5 179.1,75.7 177.3,75.7 174.7,78.4" fill="#d69090"/><polygon points="179.1,82.4 181.4,84.0 182.8,84.0 182.9,83.9 183.5,80.5 182.7,79.6 180.1,79.5 179.5,80.1" fill="#dfc0c0"/><polygon points="174.3,71.6 177.3,75.7 179.1,75.7 181.3,73.5 181.0,71.5 174.3,71.5" fill="#e6cbcb"/><polygon points="176.2,67.3 180.8,68.2 181.7,66.4 179.8,63.7 177.0,62.8" fill="#dcbcbc"/><polygon points="181.0,71.5 181.3,73.5 183.8,75.1 187.6,73.1 188.1,71.7 186.6,70.1 181.3,70.7" fill="#dca8a8"/><polygon points="179.1,75.7 180.1,79.5 182.7,79.6 184.0,76.1 183.8,75.1 181.3,73.5" fill="#e8cfcf"/><polygon points="180.4,51.1 184.2,49.4 183.8,47.6 180.0,47.0 179.5,47.0 179.5,47.0 179.8,50.7" fill="#dfc0c0"/><polygon points="179.5,47.0 179.5,47.0 179.4,47.0" fill="#dcbcbc"/><polygon points="178.8,55.8 179.3,58.9 182.7,60.2 185.1,59.7 184.6,57.9 180.0,55.0" fill="#e3c6c6"/><polygon points="180.8,68.2 181.3,70.7 186.6,70.1 186.6,67.2 182.0,66.2 181.7,66.4" fill="#e3c6c6"/><polygon points="179.8,63.7 181.7,66.4 182.0,66.2 186.0,60.9 185.9,60.3 185.1,59.7 182.7,60.2" fill="#e3c6c6"/><polygon points="180.0,55.0 184.6,57.9 185.5,53.8 180.7,53.4" fill="#d69090"/><polygon points="180.7,53.4 185.5,53.8 185.9,53.2 185.4,50.2 184.2,49.4 180.4,51.1" fill="#dca8a8"/><polygon points="182.0,66.2 186.6,67.2 187.1,66.6 187.0,62.5 186.0,60.9" fill="#dcbcbc"/><polygon points="185.9,60.3 189.8,58.4 189.8,53.9 185.9,53.2 185.5,53.8 184.6,57.9 185.1,59.7" fill="#dfc0c0"/><polygon points="184.2,49.4 185.4,50.2 189.0,48.5 188.9,48.3 183.8,47.6" fill="#dcbcbc"/><polygon points="182.9,83.9 183.4,84.0 185.9,84.0 187.5,80.7 183.5,80.5" fill="#dfc0c0"/><polygon points="196.2,82.6 195.3,82.7 194.4,84.0 196.6,84.0" fill="#d69090"/><polygon points="187.3,77.9 184.0,76.1 182.7,79.6 183.5,80.5 187.5,80.7 187.5,80.7" fill="#dfc0c0"/><polygon points="187.5,80.7 188.6,81.1 191.5,78.6 190.5,76.4 188.9,76.1 187.3,77.9" fill="#dca8a8"/><polygon points="184.0,76.1 187.3,77.9 188.9,76.1 187.6,73.1 183.8,75.1" fill="#dfc0c0"/><polygon points="185.9,84.0 189.7,84.0 189.8,82.5 188.6,81.1 187.5,80.7 187.5,80.7" fill="#e8cfcf"/><polygon points="188.1,71.7 188.8,71.6 191.8,68.7 191.8,68.4 190.7,66.9 187.1,66.6 186.6,67.2 186.6,70.1" fill="#e8cfcf"/><polygon points="185.4,50.2 185.9,53.2 189.8,53.9 191.5,52.6 190.2,48.7 189.0,48.5" fill="#e3c6c6"/><polygon points="187.1,66.6 190.7,66.9 191.4,63.9 187.0,62.5" fill="#d69090"/><polygon points="186.0,60.9 187.0,62.5 191.4,63.9 191.6,63.7 192.2,59.2 189.8,58.4 185.9,60.3" fill="#dfc0c0"/><polygon points="187.6,73.1 188.9,76.1 190.5,76.4 193.0,74.1 188.8,71.6 188.1,71.7" fill="#dfc0c0"/><polygon points="195.3,82.7 194.6,82.3 189.8,82.5 189.7,84.0 194.4,84.0" fill="#dcbcbc"/><polygon points="188.6,81.1 189.8,82.5 194.6,82.3 192.9,79.0 191.5,78.6" fill="#dfc0c0"/><polygon points="189.8,58.4 192.2,59.2 193.9,58.8 194.7,58.0 194.1,53.0 191.5,52.6 189.8,53.9" fill="#e6cbcb"/><polygon points="189.0,48.5 190.2,48.7 190.4,48.6 188.9,48.3" fill="#e6cbcb"/><polygon points="191.8,68.4 195.0,66.7 194.1,64.1 191.6,63.7 191.4,63.9 190.7,66.9" fill="#dca8a8"/><polygon points="191.5,78.6 192.9,79.0 195.5,75.8 195.5,75.8 194.7,74.0 194.6,73.9 193.0,74.1 190.5,76.4" fill="#d69090"/><polygon points="193.0,74.1 194.6,73.9 194.6,71.7 191.8,68.7 188.8,71.6" fill="#e6cbcb"/><polygon points="191.5,52.6 194.1,53.0 195.0,52.4 195.1,49.3 190.4,48.6 190.2,48.7" fill="#e6cbcb"/><polygon points="192.9,79.0 194.6,82.3 195.3,82.7 196.2,82.6 196.9,82.2 197.4,81.0 195.5,75.8" fill="#e8cfcf"/><polygon points="191.8,68.7 194.6,71.7 197.7,68.3 197.7,67.6 195.0,66.7 191.8,68.4" fill="#e3c6c6"/><polygon points="191.6,63.7 194.1,64.1 195.4,62.6 193.9,58.8 192.2,59.2" fill="#e6cbcb"/><polygon points="195.0,66.7 197.7,67.6 198.1,67.3 198.7,65.6 196.9,62.7 195.4,62.6 194.1,64.1" fill="#dca8a8"/><polygon points="193.9,58.8 195.4,62.6 196.9,62.7 199.0,60.3 195.5,58.1 194.7,58.0" fill="#d69090"/><polygon points="194.6,71.7 194.6,73.9 194.7,74.0 200.0,72.1 197.7,68.3" fill="#dfc0c0"/><polygon points="194.7,58.0 195.5,58.1 199.3,55.4 198.4,52.6 195.0,52.4 194.1,53.0" fill="#dfc0c0"/><polygon points="196.9,82.2 199.9,83.3 202.6,82.2 203.3,79.2 200.3,78.8 197.4,81.0" fill="#dfc0c0"/><polygon points="197.7,68.3 200.0,72.1 200.3,72.2 202.9,70.0 202.8,68.3 198.1,67.3 197.7,67.6" fill="#e8cfcf"/><polygon points="195.5,75.8 197.4,81.0 200.3,78.8 199.2,76.2 195.5,75.8" fill="#e6cbcb"/><polygon points="199.0,60.3 201.3,60.1 201.4,60.0 201.1,56.9 199.3,55.4 195.5,58.1" fill="#dcbcbc"/><polygon points="195.0,52.4 198.4,52.6 199.3,51.8 199.5,49.9 195.1,49.3" fill="#e3c6c6"/><polygon points="198.7,65.6 201.1,63.9 201.7,60.9 201.3,60.1 199.0,60.3 196.9,62.7" fill="#dca8a8"/><polygon points="194.7,74.0 195.5,75.8 199.2,76.2 200.9,73.8 200.3,72.2 200.0,72.1" fill="#d69090"/><polygon points="198.4,52.6 199.3,55.4 201.1,56.9 204.3,54.5 204.0,52.4 199.3,51.8" fill="#dcbcbc"/><polygon points="196.2,82.6 196.6,84.0 200.1,84.0 199.9,83.3 196.9,82.2" fill="#d69090"/><polygon points="200.3,78.8 203.3,79.2 203.9,78.9 205.8,76.0 200.9,73.8 199.2,76.2" fill="#e8cfcf"/><polygon points="198.7,65.6 198.1,67.3 202.8,68.3 203.7,67.1 203.7,66.2 201.1,63.9" fill="#e6cbcb"/><polygon points="200.1,84.0 203.8,84.0 202.6,82.2 199.9,83.3" fill="#dcbcbc"/><polygon points="203.8,84.0 206.3,84.0 207.4,83.1 203.9,78.9 203.3,79.2 202.6,82.2" fill="#e6cbcb"/><polygon points="200.9,73.8 205.8,76.0 207.0,75.4 206.9,72.4 202.9,70.0 200.3,72.2" fill="#e6cbcb"/><polygon points="201.3,60.1 201.7,60.9 205.9,62.6 207.2,60.8 206.5,58.1 201.4,60.0" fill="#e3c6c6"/><polygon points="203.7,66.2 206.1,63.9 205.9,62.6 201.7,60.9 201.1,63.9" fill="#e3c6c6"/><polygon points="202.9,70.0 206.9,72.4 207.8,70.6 207.6,68.6 203.7,67.1 202.8,68.3" fill="#e6cbcb"/><polygon points="199.3,51.8 204.0,52.4 205.1,50.5 203.8,48.9 200.0,50.0 199.5,49.9" fill="#dca8a8"/><polygon points="201.4,60.0 206.5,58.1 207.1,56.4 204.3,54.5 201.1,56.9" fill="#e8cfcf"/><polygon points="203.9,78.9 207.4,83.1 207.8,83.1 210.0,80.0 207.8,75.7 207.0,75.4 205.8,76.0" fill="#dca8a8"/><polygon points="204.3,54.5 207.1,56.4 208.4,56.0 209.9,53.8 209.8,53.6 205.9,50.3 205.1,50.5 204.0,52.4" fill="#e8cfcf"/><polygon points="203.7,67.1 207.6,68.6 209.1,65.8 206.1,63.9 203.7,66.2" fill="#d69090"/><polygon points="205.1,50.5 205.9,50.3 208.0,48.3 208.0,47.6 203.8,48.9" fill="#e6cbcb"/><polygon points="207.8,83.1 207.4,83.1 206.3,84.0 208.7,84.0" fill="#e3c6c6"/><polygon points="207.8,70.6 212.7,70.1 211.1,65.2 209.1,65.8 207.6,68.6" fill="#dca8a8"/><polygon points="206.9,72.4 207.0,75.4 207.8,75.7 212.1,74.7 213.8,72.5 213.8,70.9 212.7,70.1 207.8,70.6" fill="#e3c6c6"/><polygon points="206.1,63.9 209.1,65.8 211.1,65.2 211.4,64.7 209.7,61.1 207.2,60.8 205.9,62.6" fill="#d69090"/><polygon points="206.5,58.1 207.2,60.8 209.7,61.1 211.2,58.7 208.4,56.0 207.1,56.4" fill="#dfc0c0"/><polygon points="218.6,42.2 219.0,41.9 218.3,42.0" fill="#e3c6c6"/><polygon points="205.9,50.3 209.8,53.6 211.3,49.5 208.0,48.3" fill="#e8cfcf"/><polygon points="209.9,53.8 213.9,54.5 214.6,49.9 213.5,48.6 211.3,49.5 209.8,53.6" fill="#dcbcbc"/><polygon points="208.0,48.3 211.3,49.5 213.5,48.6 213.7,47.1 212.0,45.8 210.0,47.0 208.0,47.6" fill="#dfc0c0"/><polygon points="211.2,58.7 213.6,58.6 215.0,55.9 213.9,54.5 209.9,53.8 208.4,56.0" fill="#dcbcbc"/><polygon points="211.4,64.7 214.3,63.9 215.1,61.8 213.6,58.6 211.2,58.7 209.7,61.1" fill="#e6cbcb"/><polygon points="211.1,65.2 212.7,70.1 213.8,70.9 215.5,69.7 216.8,66.2 214.3,63.9 211.4,64.7" fill="#dca8a8"/><polygon points="207.8,83.1 208.7,84.0 212.5,84.0 212.3,80.6 210.0,80.0" fill="#e8cfcf"/><polygon points="212.5,84.0 216.1,84.0 217.2,82.1 216.2,80.8 213.0,80.3 212.3,80.6" fill="#dca8a8"/><polygon points="210.0,80.0 212.3,80.6 213.0,80.3 213.7,76.9 212.1,74.7 207.8,75.7" fill="#dcbcbc"/><polygon points="213.7,47.1 216.2,44.2 215.4,43.6 212.0,45.8" fill="#dfc0c0"/><polygon points="213.7,76.9 216.4,77.1 216.9,74.1 213.8,72.5 212.1,74.7" fill="#e6cbcb"/><polygon points="213.6,58.6 215.1,61.8 218.1,60.9 219.0,57.6 217.7,55.7 215.0,55.9" fill="#dcbcbc"/><polygon points="215.0,55.9 217.7,55.7 219.5,53.1 219.3,50.6 214.6,49.9 213.9,54.5" fill="#dfc0c0"/><polygon points="223.3,83.6 222.3,84.0 223.8,84.0" fill="#dcbcbc"/><polygon points="216.1,84.0 220.8,84.0 218.5,82.2 217.2,82.1" fill="#dca8a8"/><polygon points="214.6,49.9 219.3,50.6 219.7,50.1 220.0,45.6 218.3,43.5 216.2,44.2 213.7,47.1 213.5,48.6" fill="#e6cbcb"/><polygon points="213.0,80.3 216.2,80.8 217.0,77.8 216.4,77.1 213.7,76.9" fill="#e3c6c6"/><polygon points="216.2,44.2 218.3,43.5 218.6,42.2 218.3,42.0 218.0,42.0 215.4,43.6" fill="#dcbcbc"/><polygon points="217.0,77.8 220.9,77.4 219.8,73.3 216.9,74.1 216.4,77.1" fill="#dfc0c0"/><polygon points="213.8,72.5 216.9,74.1 219.8,73.3 220.2,72.6 219.6,71.3 215.5,69.7 213.8,70.9" fill="#e8cfcf"/><polygon points="218.1,60.9 221.0,62.9 222.3,62.1 223.0,59.9 222.5,58.3 219.0,57.6" fill="#dfc0c0"/><polygon points="214.3,63.9 216.8,66.2 219.9,66.1 221.0,62.9 218.1,60.9 215.1,61.8" fill="#e6cbcb"/><polygon points="217.7,55.7 219.0,57.6 222.5,58.3 224.2,55.1 219.5,53.1" fill="#dcbcbc"/><polygon points="219.6,71.3 220.5,66.8 219.9,66.1 216.8,66.2 215.5,69.7" fill="#d69090"/><polygon points="218.6,42.2 218.3,43.5 220.0,45.6 224.2,45.5 225.1,42.1 223.8,41.4 219.0,41.9" fill="#d69090"/><polygon points="217.0,77.8 216.2,80.8 217.2,82.1 218.5,82.2 221.5,77.9 220.9,77.4" fill="#e6cbcb"/><polygon points="220.5,66.8 223.9,67.8 225.1,67.2 225.8,66.0 225.4,63.9 222.3,62.1 221.0,62.9 219.9,66.1" fill="#d69090"/><polygon points="220.2,72.6 223.3,72.0 223.9,67.8 220.5,66.8 219.6,71.3" fill="#e8cfcf"/><polygon points="219.8,73.3 220.9,77.4 221.5,77.9 222.2,78.0 224.1,76.8 224.3,72.7 223.3,72.0 220.2,72.6" fill="#d69090"/><polygon points="218.5,82.2 220.8,84.0 222.3,84.0 223.3,83.6 223.9,81.5 222.2,78.0 221.5,77.9" fill="#d69090"/><polygon points="219.3,50.6 219.5,53.1 224.2,55.1 224.8,54.8 223.8,50.1 219.7,50.1" fill="#dfc0c0"/><polygon points="219.7,50.1 223.8,50.1 225.2,48.9 225.3,46.6 224.2,45.5 220.0,45.6" fill="#e6cbcb"/><polygon points="223.9,81.5 226.8,80.6 227.8,78.7 226.9,77.2 224.1,76.8 222.2,78.0" fill="#e6cbcb"/><polygon points="223.0,59.9 226.8,59.8 227.3,59.0 225.2,54.9 224.8,54.8 224.2,55.1 222.5,58.3" fill="#e6cbcb"/><polygon points="223.3,72.0 224.3,72.7 227.6,72.3 228.2,70.7 225.1,67.2 223.9,67.8" fill="#e6cbcb"/><polygon points="225.3,46.6 227.6,46.1 228.1,45.2 227.3,42.3 226.1,41.6 225.1,42.1 224.2,45.5" fill="#dca8a8"/><polygon points="225.4,63.9 227.4,62.0 226.8,59.8 223.0,59.9 222.3,62.1" fill="#dcbcbc"/><polygon points="224.8,54.8 225.2,54.9 227.1,54.0 227.4,53.6 227.1,50.2 225.2,48.9 223.8,50.1" fill="#e8cfcf"/><polygon points="225.1,42.1 226.1,41.6 226.3,41.1 223.8,41.4" fill="#dfc0c0"/><polygon points="227.1,50.2 229.3,49.4 228.6,46.8 227.6,46.1 225.3,46.6 225.2,48.9" fill="#e3c6c6"/><polygon points="226.8,59.8 227.4,62.0 229.4,62.5 231.4,59.9 231.3,59.7 229.6,58.3 227.3,59.0" fill="#dfc0c0"/><polygon points="224.3,72.7 224.1,76.8 226.9,77.2 228.6,74.2 227.6,72.3" fill="#e6cbcb"/><polygon points="225.8,66.0 229.5,65.9 230.4,64.7 229.4,62.5 227.4,62.0 225.4,63.9" fill="#e6cbcb"/><polygon points="226.8,80.6 228.5,82.8 229.9,82.6 231.6,79.9 231.3,79.1 227.8,78.7" fill="#e6cbcb"/><polygon points="223.3,83.6 223.8,84.0 227.8,84.0 228.5,82.8 226.8,80.6 223.9,81.5" fill="#dca8a8"/><polygon points="225.1,67.2 228.2,70.7 230.3,69.4 229.5,65.9 225.8,66.0" fill="#e6cbcb"/><polygon points="227.3,59.0 229.6,58.3 229.8,56.3 227.1,54.0 225.2,54.9" fill="#e3c6c6"/><polygon points="229.9,82.6 228.5,82.8 227.8,84.0 231.0,84.0" fill="#dfc0c0"/><polygon points="227.6,46.1 228.6,46.8 228.1,45.2" fill="#dfc0c0"/><polygon points="227.1,50.2 227.4,53.6 230.6,52.3 230.0,52.0 229.3,49.4" fill="#e8cfcf"/><polygon points="227.1,54.0 229.8,56.3 231.5,55.4 231.9,52.8 230.6,52.3 227.4,53.6" fill="#e3c6c6"/><polygon points="227.6,72.3 228.6,74.2 231.1,74.9 232.5,72.8 231.5,69.6 230.3,69.4 228.2,70.7" fill="#e8cfcf"/><polygon points="227.8,78.7 231.3,79.1 232.1,76.4 231.1,74.9 228.6,74.2 226.9,77.2" fill="#e6cbcb"/><polygon points="229.5,65.9 230.3,69.4 231.5,69.6 233.4,68.8 233.0,64.9 232.6,64.6 230.4,64.7" fill="#dcbcbc"/><polygon points="226.1,41.6 227.3,42.3 227.0,41.0 226.3,41.1" fill="#dfc0c0"/><polygon points="229.6,58.3 231.3,59.7 233.8,56.9 231.5,55.4 229.8,56.3" fill="#e6cbcb"/><polygon points="229.9,82.6 231.0,84.0 234.0,84.0 234.5,82.4 233.9,80.9 231.6,79.9" fill="#e3c6c6"/><polygon points="230.4,64.7 232.6,64.6 233.4,61.3 231.4,59.9 229.4,62.5" fill="#dca8a8"/><polygon points="232.5,72.8 235.7,72.8 234.7,69.1 233.4,68.8 231.5,69.6" fill="#e3c6c6"/><polygon points="231.5,55.4 233.8,56.9 234.1,56.9 235.4,54.3 231.9,52.8" fill="#e3c6c6"/><polygon points="231.1,74.9 232.1,76.4 235.4,76.1 236.1,75.4 235.8,72.9 235.7,72.8 232.5,72.8" fill="#dcbcbc"/><polygon points="231.6,79.9 233.9,80.9 235.8,78.9 235.4,76.1 232.1,76.4 231.3,79.1" fill="#dfc0c0"/><polygon points="231.3,59.7 231.4,59.9 233.4,61.3 236.5,60.6 236.7,59.3 234.1,56.9 233.8,56.9" fill="#dcbcbc"/><polygon points="232.6,64.6 233.0,64.9 236.3,64.8 237.6,62.4 236.5,60.6 233.4,61.3" fill="#dcbcbc"/><polygon points="238.5,82.6 234.5,82.4 234.0,84.0 238.6,84.0" fill="#e6cbcb"/><polygon points="235.8,72.9 239.5,71.2 239.6,70.9 237.8,67.9 237.3,67.7 234.7,69.1 235.7,72.8" fill="#e8cfcf"/><polygon points="233.4,68.8 234.7,69.1 237.3,67.7 236.3,64.8 233.0,64.9" fill="#e6cbcb"/><polygon points="237.3,67.7 237.8,67.9 240.1,66.3 240.1,64.2 240.0,64.0 239.6,62.7 237.6,62.4 236.3,64.8" fill="#e6cbcb"/><polygon points="236.7,59.3 238.0,58.1 237.0,55.0 235.4,54.3 234.1,56.9" fill="#e6cbcb"/><polygon points="235.8,78.9 240.1,80.1 240.2,80.0 238.1,75.9 236.1,75.4 235.4,76.1" fill="#e3c6c6"/><polygon points="233.9,80.9 234.5,82.4 238.5,82.6 240.2,80.5 240.1,80.1 235.8,78.9" fill="#e8cfcf"/><polygon points="236.5,60.6 237.6,62.4 239.6,62.7 238.0,58.1 236.7,59.3" fill="#d69090"/><polygon points="240.2,80.0 243.2,76.2 242.7,75.2 240.5,74.1 238.1,75.9" fill="#e3c6c6"/><polygon points="238.6,84.0 242.9,84.0 241.2,81.0 240.2,80.5 238.5,82.6" fill="#dfc0c0"/><polygon points="240.1,80.1 240.2,80.5 241.2,81.0 245.4,80.6 246.9,78.6 246.1,77.0 243.2,76.2 240.2,80.0" fill="#e6cbcb"/><polygon points="236.1,75.4 238.1,75.9 240.5,74.1 239.5,71.2 235.8,72.9" fill="#e3c6c6"/><polygon points="239.5,71.2 240.5,74.1 242.7,75.2 244.4,71.6 244.2,71.0 242.2,70.0 239.6,70.9" fill="#e8cfcf"/><polygon points="239.6,70.9 242.2,70.0 242.4,67.9 241.8,66.9 240.1,66.3 237.8,67.9" fill="#d69090"/><polygon points="240.1,66.3 241.8,66.9 240.1,64.2" fill="#dcbcbc"/><polygon points="242.9,84.0 246.0,84.0 245.4,80.6 241.2,81.0" fill="#d69090"/><polygon points="244.2,71.0 244.3,70.9 242.4,67.9 242.2,70.0" fill="#dca8a8"/><polygon points="242.7,75.2 243.2,76.2 246.1,77.0 247.0,75.6 245.0,72.0 245.0,71.9 244.4,71.6" fill="#dfc0c0"/><polygon points="245.4,80.6 246.0,84.0 248.2,84.0 249.2,83.8 248.6,79.3 246.9,78.6" fill="#e8cfcf"/><polygon points="244.4,71.6 245.0,71.9 244.3,70.9 244.2,71.0" fill="#e6cbcb"/><polygon points="249.2,83.8 248.2,84.0 249.7,84.0" fill="#dca8a8"/><polygon points="246.9,78.6 248.6,79.3 249.0,79.2 247.0,75.6 246.1,77.0" fill="#e8cfcf"/><polygon points="248.6,79.3 249.2,83.8 249.7,84.0 250.6,84.0 251.8,82.8 250.0,81.0 249.0,79.2" fill="#dfc0c0"/><polygon points="250.6,84.0 253.0,84.0 251.8,82.8" fill="#dcbcbc"/></g></svg>
<div class="abs" style="left:267px;top:521.5px;width:33.5px;height:11px;background:#d4d4d4;border:1px solid #9a9a9a"></div>
<div class="t" style="left:270.50px;top:524.80px;font-size:5.52px;font-weight:normal;-webkit-text-stroke:0.2px currentColor;color:#333;transform:scaleX(1.0490);">100 km</div>
<div class="t" style="left:361.80px;top:514.22px;font-size:7.27px;font-weight:normal;-webkit-text-stroke:0.2px currentColor;color:#cfcfcf;transform:scaleX(0.9595);">Barrie</div>
<div class="abs" style="left:380px;top:521.5px;width:2px;height:2px;background:#e6e6e6;border-radius:1px"></div>
<div class="t" style="left:387.80px;top:514.22px;font-size:7.27px;font-weight:normal;-webkit-text-stroke:0.2px currentColor;color:#cfcfcf;transform:scaleX(0.8098);">Kawartha Lakes</div>
<div class="abs" style="left:407.6px;top:523px;width:2px;height:2px;background:#e6e6e6;border-radius:1px"></div>
<div class="t" style="left:392.00px;top:542.50px;font-size:8.72px;font-weight:normal;-webkit-text-stroke:0.2px currentColor;color:#e8e8e8;transform:scaleX(0.8251);">Toronto</div>
<div class="abs" style="left:388.6px;top:551.5px;width:2px;height:2px;background:#e6e6e6;border-radius:1px"></div>
<div class="t" style="left:362.20px;top:558.22px;font-size:7.27px;font-weight:normal;-webkit-text-stroke:0.2px currentColor;color:#cfcfcf;transform:scaleX(0.9381);">Hamilton</div>
<div class="abs" style="left:374.5px;top:567.5px;width:2px;height:2px;background:#e6e6e6;border-radius:1px"></div>
<div class="t" style="left:324.90px;top:569.12px;font-size:7.27px;font-weight:normal;-webkit-text-stroke:0.2px currentColor;color:#cfcfcf;transform:scaleX(0.8824);">London</div>
<div class="abs" style="left:334.5px;top:578.5px;width:2px;height:2px;background:#e6e6e6;border-radius:1px"></div>
<div class="t" style="left:462.80px;top:519.32px;font-size:7.27px;font-weight:normal;-webkit-text-stroke:0.2px currentColor;color:#cfcfcf;transform:scaleX(0.8627);">Kingston</div>
<div class="abs" style="left:473.6px;top:528px;width:2px;height:2px;background:#e6e6e6;border-radius:1px"></div>
<div class="t" style="left:504.80px;top:565.02px;font-size:7.27px;font-weight:normal;-webkit-text-stroke:0.2px currentColor;color:#cfcfcf;transform:scaleX(0.8033);">Utica</div>
<div class="abs" style="left:510.3px;top:574px;width:2px;height:2px;background:#e6e6e6;border-radius:1px"></div>
<div class="t" style="left:545.20px;top:582.32px;font-size:7.27px;font-weight:normal;-webkit-text-stroke:0.2px currentColor;color:#cfcfcf;transform:scaleX(0.8910);">Albany</div>
<div class="abs" style="left:553.6px;top:591.8px;width:2px;height:2px;background:#e6e6e6;border-radius:1px"></div>
<div class="t" style="left:617.80px;top:583.22px;font-size:7.27px;font-weight:normal;-webkit-text-stroke:0.2px currentColor;color:#cfcfcf;">Lowell</div>
<div class="abs" style="left:625.3px;top:592.5px;width:2px;height:2px;background:#e6e6e6;border-radius:1px"></div>
<div class="t" style="left:567.80px;top:532.24px;font-size:6.25px;font-weight:normal;-webkit-text-stroke:0.2px currentColor;color:#a0a0a0;transform:scaleX(0.8527);letter-spacing:1.3px;">VERMONT</div>
<div class="t" style="left:611.30px;top:542.64px;font-size:6.69px;font-weight:normal;-webkit-text-stroke:0.2px currentColor;color:#a0a0a0;transform:scaleX(0.8132);letter-spacing:1.3px;">NEW</div>
<div class="t" style="left:598.90px;top:550.34px;font-size:6.69px;font-weight:normal;-webkit-text-stroke:0.2px currentColor;color:#a0a0a0;letter-spacing:1.3px;">HAMPSHIRE</div>
<div class="t" style="left:506.70px;top:584.25px;font-size:7.12px;font-weight:normal;-webkit-text-stroke:0.2px currentColor;color:#a0a0a0;transform:scaleX(0.7751);letter-spacing:1.4px;">YORK</div>
<div class="abs" style="left:633px;top:516px;width:9px;height:81px;background:#2f343c;"></div>
<div class="abs" style="left:642px;top:471px;width:13px;height:126px;background:#252a31;"></div>
</body></html>
